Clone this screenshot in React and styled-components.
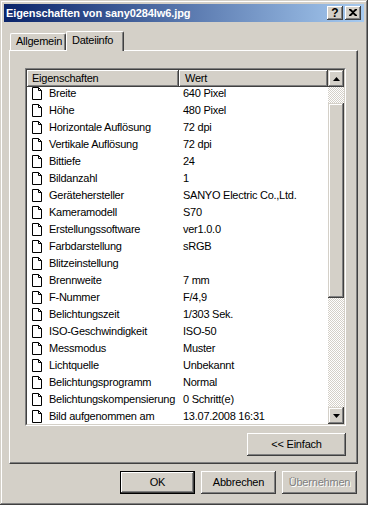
import React from 'react';
import styled, { createGlobalStyle } from 'styled-components';

const FACE = '#D4D0C8';
const HI = '#FFFFFF';
const SH = '#808080';
const DK = '#404040';

const Global = createGlobalStyle`
  html, body { margin: 0; padding: 0; background: ${FACE}; }
  body {
    font-family: "Liberation Sans", Arial, sans-serif;
    font-size: 11px;
    color: #000;
  }
  * { box-sizing: border-box; }
`;

const Window = styled.div`
  width: 368px;
  height: 505px;
  background: ${FACE};
  box-shadow: inset -1px -1px ${DK}, inset 1px 1px ${FACE}, inset -2px -2px ${SH}, inset 2px 2px ${HI};
  padding: 4px;
  display: flex;
  flex-direction: column;
`;

const TitleBar = styled.div`
  height: 18px;
  background: linear-gradient(to right, #0A246A, #A6CAF0);
  display: flex;
  align-items: center;
  padding: 0 3px 0 2px;
`;

const Title = styled.span`
  flex: 1;
  color: #fff;
  font-weight: bold;
  font-size: 11px;
  letter-spacing: -0.1px;
`;

const CaptionButton = styled.div`
  width: 16px;
  height: 14px;
  margin-left: ${p => (p.$gap ? 2 : 0)}px;
  background: ${FACE};
  box-shadow: inset -1px -1px ${DK}, inset 1px 1px ${HI}, inset -2px -2px ${SH}, inset 2px 2px ${FACE};
  display: flex;
  align-items: center;
  justify-content: center;
  font-weight: bold;
  font-size: 12px;
  line-height: 1;
  padding-bottom: 1px;
`;

const Content = styled.div`
  flex: 1;
  display: flex;
  flex-direction: column;
  padding: 9px 6px 0 5px;
`;

const TabStrip = styled.div`
  display: flex;
  align-items: flex-end;
  height: 19px;
  padding-left: 1px;
  position: relative;
  z-index: 1;
`;

const Tab = styled.div`
  width: ${p => p.$w}px;
  height: ${p => (p.$active ? 20 : 17)}px;
  margin-bottom: ${p => (p.$active ? -1 : 0)}px;
  background: ${FACE};
  border-top: 1px solid ${HI};
  border-left: 1px solid ${HI};
  border-right: 1px solid ${DK};
  border-radius: 2px 2px 0 0;
  box-shadow: inset -1px 0 ${SH};
  padding: ${p => (p.$active ? '2px 0 0 5px' : '1px 0 0 5px')};
  line-height: 13px;
  letter-spacing: -0.25px;
  white-space: nowrap;
`;

const Panel = styled.div`
  flex: 1;
  display: flex;
  flex-direction: column;
  background: ${FACE};
  border-top: 1px solid ${HI};
  border-left: 1px solid ${HI};
  border-right: 1px solid ${DK};
  border-bottom: 1px solid ${DK};
  box-shadow: inset -1px -1px ${SH};
  padding: 17px 11px 7px 15px;
`;

const ListOuter = styled.div`
  height: 358px;
  border: 1px solid;
  border-color: ${SH} ${HI} ${HI} ${SH};
`;

const ListInner = styled.div`
  height: 100%;
  border: 1px solid;
  border-color: ${DK} ${FACE} ${FACE} ${DK};
  background: #fff;
  display: flex;
  overflow: hidden;
`;

const ListMain = styled.div`
  flex: 1;
  display: flex;
  flex-direction: column;
  min-width: 0;
`;

const Header = styled.div`
  display: flex;
  height: 17px;
  flex-shrink: 0;
`;

const HeaderCell = styled.div`
  width: ${p => (p.$w ? `${p.$w}px` : 'auto')};
  flex: ${p => (p.$w ? '0 0 auto' : '1')};
  background: ${FACE};
  box-shadow: inset -1px -1px ${DK}, inset 1px 1px ${HI}, inset -2px -2px ${SH};
  padding: 2px 0 0 ${p => p.$pl}px;
  line-height: 13px;
  white-space: nowrap;
  overflow: hidden;
  letter-spacing: -0.25px;
`;

const Rows = styled.div`
  flex: 1;
  overflow: hidden;
`;

const RowsScroll = styled.div`
  margin-top: -3px;
`;

const Row = styled.div`
  display: flex;
  height: 17px;
  align-items: center;
  padding-top: 1px;
`;

const NameCell = styled.div`
  width: 152px;
  display: flex;
  align-items: center;
  padding-left: 5px;
  gap: 6px;
  white-space: nowrap;
  letter-spacing: -0.25px;
  overflow: hidden;
`;

const ValueCell = styled.div`
  flex: 1;
  padding-left: 4px;
  white-space: nowrap;
  letter-spacing: -0.25px;
`;

const Scrollbar = styled.div`
  width: 16px;
  display: flex;
  flex-direction: column;
  background: repeating-conic-gradient(${HI} 0 25%, ${FACE} 0 50%) 0 0 / 2px 2px;
`;

const ScrollButton = styled.div`
  height: 17px;
  flex-shrink: 0;
  background: ${FACE};
  box-shadow: inset -1px -1px ${DK}, inset 1px 1px ${FACE}, inset -2px -2px ${SH}, inset 2px 2px ${HI};
  display: flex;
  align-items: center;
  justify-content: center;
`;

const Track = styled.div`
  flex: 1;
  display: flex;
  flex-direction: column;
`;

const Thumb = styled.div`
  margin-top: 16px;
  height: 195px;
  background: ${FACE};
  box-shadow: inset -1px -1px ${DK}, inset 1px 1px ${FACE}, inset -2px -2px ${SH}, inset 2px 2px ${HI};
`;

const PanelFooter = styled.div`
  display: flex;
  justify-content: flex-end;
  margin-top: 7px;
`;

const Button = styled.div`
  width: ${p => p.$w}px;
  height: 23px;
  background: ${FACE};
  box-shadow: ${p =>
    p.$default
      ? `inset 0 0 0 1px #000, inset -2px -2px ${DK}, inset 2px 2px ${HI}, inset -3px -3px ${SH}`
      : `inset -1px -1px ${DK}, inset 1px 1px ${HI}, inset -2px -2px ${SH}`};
  display: flex;
  align-items: center;
  justify-content: center;
  color: ${p => (p.$disabled ? SH : '#000')};
  text-shadow: ${p => (p.$disabled ? `1px 1px 0 ${HI}` : 'none')};
  letter-spacing: -0.2px;
  padding-bottom: 1px;
`;

const DialogButtons = styled.div`
  display: flex;
  justify-content: flex-end;
  gap: 6px;
  padding: 7px 1px 7px 0;
`;

const DocIcon = () => (
  <svg width="11" height="13" viewBox="0 0 11 13" style={{ flexShrink: 0 }}>
    <path d="M0.5 0.5H6.5L9.5 3.5V12.5H0.5Z" fill="#fff" stroke="#000" strokeWidth="1" />
    <path d="M6.5 0.5V3.5H9.5" fill="none" stroke="#000" strokeWidth="1" />
  </svg>
);

const rows = [
  ['Breite', '640 Pixel'],
  ['Höhe', '480 Pixel'],
  ['Horizontale Auflösung', '72 dpi'],
  ['Vertikale Auflösung', '72 dpi'],
  ['Bittiefe', '24'],
  ['Bildanzahl', '1'],
  ['Gerätehersteller', 'SANYO Electric Co.,Ltd.'],
  ['Kameramodell', 'S70'],
  ['Erstellungssoftware', 'ver1.0.0'],
  ['Farbdarstellung', 'sRGB'],
  ['Blitzeinstellung', ''],
  ['Brennweite', '7 mm'],
  ['F-Nummer', 'F/4,9'],
  ['Belichtungszeit', '1/303 Sek.'],
  ['ISO-Geschwindigkeit', 'ISO-50'],
  ['Messmodus', 'Muster'],
  ['Lichtquelle', 'Unbekannt'],
  ['Belichtungsprogramm', 'Normal'],
  ['Belichtungskompensierung', '0 Schritt(e)'],
  ['Bild aufgenommen am', '13.07.2008 16:31'],
];

export default function App() {
  return (
    <>
      <Global />
      <Window>
        <TitleBar>
          <Title>Eigenschaften von sany0284lw6.jpg</Title>
          <CaptionButton>?</CaptionButton>
          <CaptionButton $gap>
            <svg width="8" height="7" viewBox="0 0 8 7">
              <path d="M0 0h2l2 2 2-2h2v1L5 3.5 8 6v1H6L4 5 2 7H0V6l3-2.5L0 1z" fill="#000" />
            </svg>
          </CaptionButton>
        </TitleBar>
        <Content>
          <TabStrip>
            <Tab $w={56}>Allgemein</Tab>
            <Tab $w={58} $active>Dateiinfo</Tab>
          </TabStrip>
          <Panel>
            <ListOuter>
              <ListInner>
                <ListMain>
                  <Header>
                    <HeaderCell $w={152} $pl={5}>Eigenschaften</HeaderCell>
                    <HeaderCell $pl={6}>Wert</HeaderCell>
                  </Header>
                  <Rows>
                    <RowsScroll>
                      {rows.map(([n, v]) => (
                        <Row key={n}>
                          <NameCell>
                            <DocIcon />
                            <span>{n}</span>
                          </NameCell>
                          <ValueCell>{v}</ValueCell>
                        </Row>
                      ))}
                    </RowsScroll>
                  </Rows>
                </ListMain>
                <Scrollbar>
                  <ScrollButton>
                    <svg width="7" height="4" viewBox="0 0 7 4">
                      <path d="M3.5 0L7 4H0Z" fill="#000" />
                    </svg>
                  </ScrollButton>
                  <Track>
                    <Thumb />
                  </Track>
                  <ScrollButton>
                    <svg width="7" height="4" viewBox="0 0 7 4">
                      <path d="M0 0H7L3.5 4Z" fill="#000" />
                    </svg>
                  </ScrollButton>
                </Scrollbar>
              </ListInner>
            </ListOuter>
            <PanelFooter>
              <Button $w={99}>&lt;&lt; Einfach</Button>
            </PanelFooter>
          </Panel>
          <DialogButtons>
            <Button $w={75} $default>OK</Button>
            <Button $w={75}>Abbrechen</Button>
            <Button $w={75} $disabled>Übernehmen</Button>
          </DialogButtons>
        </Content>
      </Window>
    </>
  );
}
